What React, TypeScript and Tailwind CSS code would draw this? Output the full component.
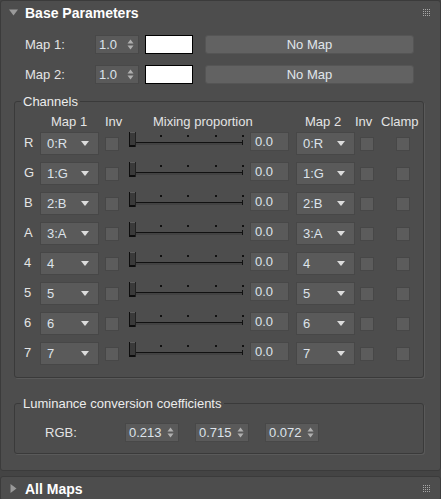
import React from 'react';

const channels = [
  { label: 'R', map1: '0:R', map2: '0:R' },
  { label: 'G', map1: '1:G', map2: '1:G' },
  { label: 'B', map1: '2:B', map2: '2:B' },
  { label: 'A', map1: '3:A', map2: '3:A' },
  { label: '4', map1: '4', map2: '4' },
  { label: '5', map1: '5', map2: '5' },
  { label: '6', map1: '6', map2: '6' },
  { label: '7', map1: '7', map2: '7' },
];

const Grip = () => (
  <svg width="9" height="9" viewBox="0 0 9 9" className="shrink-0">
    {[0, 1, 2, 3].map((r) =>
      [0, 1, 2, 3].map((c) => (
        <rect key={`${r}-${c}`} x={c * 2 + 1} y={r * 2 + 1} width="1" height="1" fill="#a8a8a8" />
      )),
    )}
  </svg>
);

const SpinArrows = () => (
  <svg width="7" height="11" viewBox="0 0 7 11" className="shrink-0">
    <path d="M3.5 0.5 L6.5 4.5 L0.5 4.5 Z" fill="#b0b0b0" />
    <path d="M3.5 10.5 L6.5 6.5 L0.5 6.5 Z" fill="#b0b0b0" />
  </svg>
);

const Spinner = ({ value, width }: { value: string; width: string }) => (
  <div
    className={`${width} h-[19px] bg-[#5a5a5a] border border-[#484848] flex items-center justify-between pl-[3px] pr-[4px] text-[#dde3ea]`}
  >
    <span>{value}</span>
    <SpinArrows />
  </div>
);

const Dropdown = ({ value }: { value: string }) => (
  <div className="w-[59px] h-[23px] bg-[#5a5a5a] border border-[#474747] flex items-center justify-between pl-[6px] pr-[9px] text-[#dde3ea]">
    <span>{value}</span>
    <svg width="8" height="5" viewBox="0 0 8 5">
      <path d="M0 0 L8 0 L4 5 Z" fill="#dcdcdc" />
    </svg>
  </div>
);

const Check = () => <div className="w-[14px] h-[14px] bg-[#5c5c5c] border border-[#474747]" />;

const Slider = () => (
  <svg width="115" height="16" viewBox="0 0 115 16" className="shrink-0">
    {[31, 58, 86, 113].map((x) => (
      <rect key={x} x={x} y="3" width="2" height="2" fill="#111" />
    ))}
    <rect x="7" y="10" width="107" height="1" fill="#111" />
    <rect x="7" y="11" width="107" height="2" fill="#434343" />
    <rect x="113" y="8" width="1" height="5" fill="#111" />
    <rect x="0" y="0" width="7" height="15" fill="#3a3a3a" />
    <rect x="0" y="0" width="7" height="1" fill="#5c5c5c" />
    <rect x="0" y="13" width="7" height="2" fill="#0d0d0d" />
    <rect x="0" y="0" width="1" height="15" fill="#0d0d0d" />
    <rect x="6" y="0" width="1" height="15" fill="#222" />
  </svg>
);

const Rollout = ({ title, open, children }: { title: string; open: boolean; children?: React.ReactNode }) => (
  <div className="bg-[#4d4d4d] border border-[#3b3b3b] rounded-[3px]">
    <div className="h-[23px] flex items-center pl-[8px] pr-[9px]">
      <svg width="9" height="9" viewBox="0 0 9 9" className="shrink-0">
        {open ? <path d="M0 1.5 L9 1.5 L4.5 7.5 Z" fill="#9a9a9a" /> : <path d="M1.5 0 L7.5 4.5 L1.5 9 Z" fill="#9a9a9a" />}
      </svg>
      <span className="ml-[7px] font-bold text-[14px] text-white">{title}</span>
      <div className="flex-1" />
      <Grip />
    </div>
    {children}
  </div>
);

export default function App() {
  return (
    <div
      className="w-[441px] h-[499px] bg-[#444444] overflow-hidden flex flex-col text-[13px] text-[#e4e4e4] leading-none"
      style={{ fontFamily: '"Liberation Sans", Arial, sans-serif' }}
    >
      <Rollout title="Base Parameters" open>
        <div className="h-[446px] flex flex-col">
          {['Map 1:', 'Map 2:'].map((m) => (
            <div key={m} className="flex items-center h-[19px] mt-[11px]">
              <span className="ml-[24px] w-[70px]">{m}</span>
              <Spinner value="1.0" width="w-[44px]" />
              <div className="ml-[6px] w-[48px] h-[19px] bg-white border border-black" />
              <div className="ml-[12px] w-[209px] h-[19px] rounded-[3px] bg-[#626262] border border-[#555] flex items-center justify-center text-[#e0e6ec]">
                No Map
              </div>
            </div>
          ))}

          <fieldset className="mt-[11px] ml-[13px] w-[410px] h-[283px] border border-[#3a3a3a] rounded-[3px] shadow-[1px_1px_0_#5a5a5a]">
            <legend className="ml-[6px] px-[2px] text-[#ececec]">Channels</legend>
            <div className="flex items-center h-[14px] mt-[6px]">
              <span className="ml-[36px] w-[54px]">Map 1</span>
              <span className="w-[48px]">Inv</span>
              <span className="w-[152px]">Mixing proportion</span>
              <span className="w-[50px]">Map 2</span>
              <span className="w-[26px]">Inv</span>
              <span>Clamp</span>
            </div>
            <div className="flex flex-col gap-[7px] mt-[4px]">
              {channels.map((c) => (
                <div key={c.label} className="flex items-center h-[23px]">
                  <span className="ml-[9px] w-[16px] -mt-[3px]">{c.label}</span>
                  <Dropdown value={c.map1} />
                  <div className="ml-[6px]">
                    <Check />
                  </div>
                  <div className="ml-[10px] self-start">
                    <Slider />
                  </div>
                  <div className="ml-[6px] self-start w-[39px] h-[19px] bg-[#5a5a5a] border border-[#484848] flex items-center pl-[4px] text-[#dde3ea]">
                    0.0
                  </div>
                  <div className="ml-[7px]">
                    <Dropdown value={c.map2} />
                  </div>
                  <div className="ml-[5px]">
                    <Check />
                  </div>
                  <div className="ml-[22px]">
                    <Check />
                  </div>
                </div>
              ))}
            </div>
          </fieldset>

          <fieldset className="mt-[19px] ml-[13px] w-[410px] h-[57px] border border-[#3a3a3a] rounded-[3px] shadow-[1px_1px_0_#5a5a5a]">
            <legend className="ml-[6px] px-[2px] text-[#ececec]">Luminance conversion coefficients</legend>
            <div className="flex items-center mt-[13px]">
              <span className="ml-[30px] w-[80px]">RGB:</span>
              <Spinner value="0.213" width="w-[54px]" />
              <div className="ml-[16px]">
                <Spinner value="0.715" width="w-[54px]" />
              </div>
              <div className="ml-[16px]">
                <Spinner value="0.072" width="w-[54px]" />
              </div>
            </div>
          </fieldset>
        </div>
      </Rollout>
      <div className="mt-[5px]">
        <Rollout title="All Maps" open={false} />
      </div>
    </div>
  );
}
